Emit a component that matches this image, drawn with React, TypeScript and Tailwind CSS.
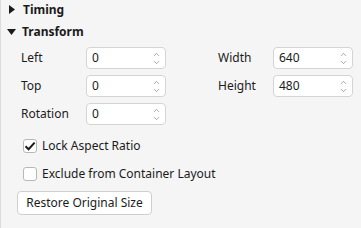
import { ChevronDown, ChevronUp } from "lucide-react";

const font = { fontFamily: '"Noto Sans", "Open Sans", sans-serif' };

function Spin({ value }: { value: string }) {
  return <div className="flex h-[22px] w-[80px] items-center rounded-[4px] border border-[#d4d4d4] bg-white pl-[5px] pr-[4px]">
    <span className="flex-1 text-[12px] text-[#1b1b1b]">{value}</span>
    <div className="flex flex-col items-center text-[#6b6b6b]">
      <ChevronUp size={9} strokeWidth={1.6} className="-mb-[1px]" />
      <ChevronDown size={9} strokeWidth={1.6} />
    </div>
  </div>;
}

function Field({ label, value, w }: { label: string; value: string; w: string }) {
  return <div className="flex items-center">
    <span className={`${w} text-[12px] text-[#1b1b1b]`}>{label}</span>
    <Spin value={value} />
  </div>;
}

function Check({ label, checked }: { label: string; checked?: boolean }) {
  return <div className="flex h-[18px] items-center gap-[5px] pl-[22px]">
    <div className="flex h-[14px] w-[14px] items-center justify-center rounded-[3px] border border-[#b8b8b8] bg-white">
      {checked && <svg width="12" height="12" viewBox="0 0 12 12"><path d="M1.5 6.2 L4.6 9.2 L10.6 2.6" fill="none" stroke="#1b1b1b" strokeWidth="2" /></svg>}
    </div>
    <span className="text-[12px] text-[#1b1b1b]">{label}</span>
  </div>;
}

export default function App() {
  return <div style={font} className="h-[228px] w-[361px] overflow-hidden border-l border-[#dcdcdc] bg-[#f5f5f5]">
    <div className="flex h-[19px] items-center gap-[8px] pl-[8px]">
      <svg width="6" height="9" viewBox="0 0 6 9"><path d="M0 0 L6 4.5 L0 9 Z" fill="#1b1b1b" /></svg>
      <span className="text-[12px] font-bold text-[#1b1b1b]">Timing</span>
    </div>
    <div className="mt-[3px] flex h-[19px] items-center gap-[6px] pl-[6px]">
      <svg width="9" height="6" viewBox="0 0 9 6"><path d="M0 0 L9 0 L4.5 6 Z" fill="#1b1b1b" /></svg>
      <span className="text-[12px] font-bold text-[#1b1b1b]">Transform</span>
    </div>
    <div className="mt-[6px] flex pl-[20px]">
      <div className="flex flex-col gap-[6px]">
        <Field label="Left" value="0" w="w-[65px]" />
        <Field label="Top" value="0" w="w-[65px]" />
        <Field label="Rotation" value="0" w="w-[65px]" />
      </div>
      <div className="ml-[52px] flex flex-col gap-[6px]">
        <Field label="Width" value="640" w="w-[55px]" />
        <Field label="Height" value="480" w="w-[55px]" />
      </div>
    </div>
    <div className="mt-[12px] flex flex-col gap-[10px]">
      <Check label="Lock Aspect Ratio" checked />
      <Check label="Exclude from Container Layout" />
    </div>
    <div className="mt-[6px] pl-[16px]">
      <button className="h-[24px] w-[135px] rounded-[4px] border border-[#cfcfcf] bg-white text-[12px] text-[#1b1b1b]">Restore Original Size</button>
    </div>
  </div>;
}
